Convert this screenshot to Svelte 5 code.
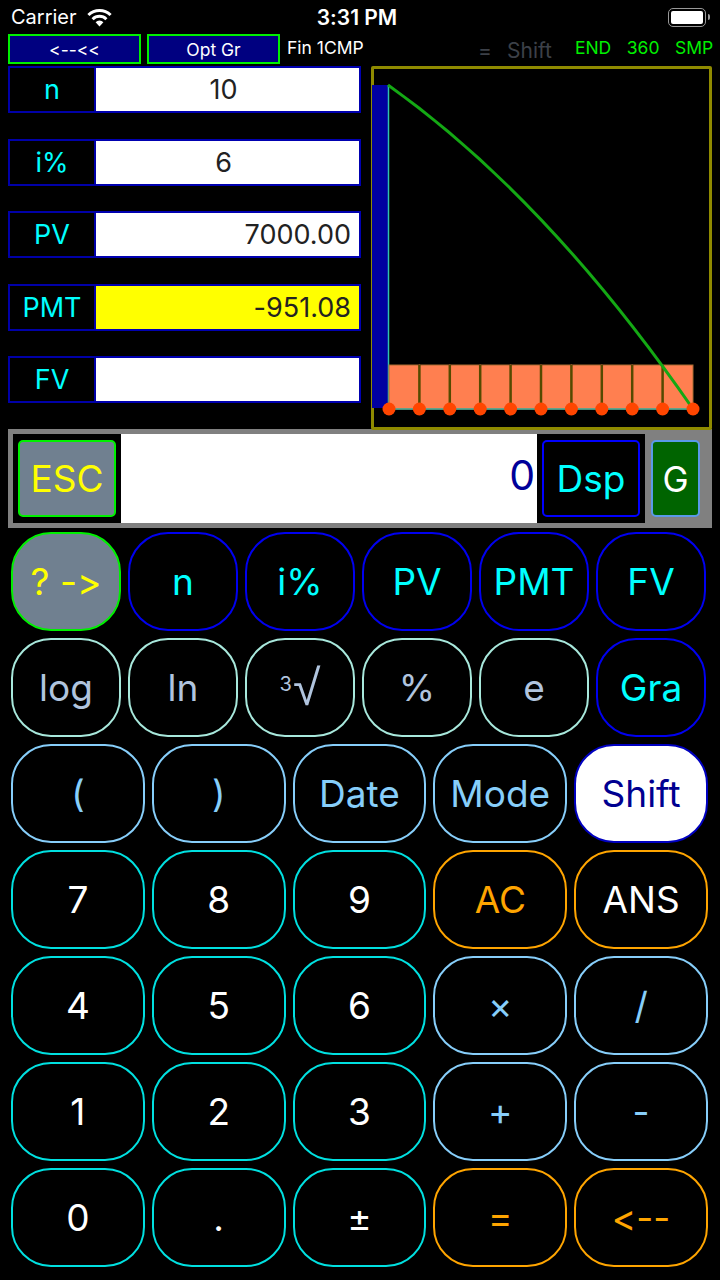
<script>
	const fields = [
		{ label: 'n', value: '10', align: 'center' },
		{ label: 'i%', value: '6', align: 'center' },
		{ label: 'PV', value: '7000.00', align: 'right' },
		{ label: 'PMT', value: '-951.08', align: 'right', active: true },
		{ label: 'FV', value: '', align: 'right' }
	];

	const topKeys = [
		[
			{ t: '? ->', c: 'query' },
			{ t: 'n', c: 'tvm' },
			{ t: 'i%', c: 'tvm' },
			{ t: 'PV', c: 'tvm' },
			{ t: 'PMT', c: 'tvm' },
			{ t: 'FV', c: 'tvm' }
		],
		[
			{ t: 'log', c: 'fn' },
			{ t: 'ln', c: 'fn' },
			{ t: 'root', c: 'fn' },
			{ t: '%', c: 'fn' },
			{ t: 'e', c: 'fn' },
			{ t: 'Gra', c: 'tvm' }
		]
	];

	const bottomKeys = [
		[
			{ t: '(', c: 'op' },
			{ t: ')', c: 'op' },
			{ t: 'Date', c: 'op' },
			{ t: 'Mode', c: 'op' },
			{ t: 'Shift', c: 'shift' }
		],
		[
			{ t: '7', c: 'num' },
			{ t: '8', c: 'num' },
			{ t: '9', c: 'num' },
			{ t: 'AC', c: 'warn' },
			{ t: 'ANS', c: 'ans' }
		],
		[
			{ t: '4', c: 'num' },
			{ t: '5', c: 'num' },
			{ t: '6', c: 'num' },
			{ t: '×', c: 'op' },
			{ t: '/', c: 'op' }
		],
		[
			{ t: '1', c: 'num' },
			{ t: '2', c: 'num' },
			{ t: '3', c: 'num' },
			{ t: '+', c: 'op' },
			{ t: '-', c: 'op' }
		],
		[
			{ t: '0', c: 'num' },
			{ t: '.', c: 'num' },
			{ t: '±', c: 'num' },
			{ t: '=', c: 'warn' },
			{ t: '<--', c: 'warn' }
		]
	];

	// amortization chart, 10 periods
	const periods = Array.from({ length: 10 }, (_, i) => i);
	const dots = Array.from({ length: 11 }, (_, i) => 15 + i * 30.4);
</script>

<div class="screen">
	<div class="status">
		<div class="carrier">
			<span>Carrier</span>
			<svg width="27" height="19" viewBox="0 0 27 19">
				<path d="M13.5 18.5 L9.6 14.2 A5.6 5.6 0 0 1 17.4 14.2 Z" fill="#fff" />
				<path d="M6.6 11.2 A9.8 9.8 0 0 1 20.4 11.2" fill="none" stroke="#fff" stroke-width="3" />
				<path d="M2.4 7 A15.8 15.8 0 0 1 24.6 7" fill="none" stroke="#fff" stroke-width="3" />
			</svg>
		</div>
		<div class="time">3:31 PM</div>
		<div class="battery"><div class="battery-fill"></div></div>
	</div>

	<div class="toolbar">
		<button class="tool">&lt;--&lt;&lt;</button>
		<button class="tool">Opt Gr</button>
		<span class="fin">Fin 1CMP</span>
		<span class="dim eq">=</span>
		<span class="dim">Shift</span>
		<div class="flags">
			<span>END</span>
			<span>360</span>
			<span>SMP</span>
		</div>
	</div>

	<div class="upper">
		<div class="fields">
			{#each fields as f}
				<div class="field">
					<div class="field-label">{f.label}</div>
					<div class="field-value {f.align}" class:active={f.active}>{f.value}</div>
				</div>
			{/each}
		</div>
		<div class="chart">
			<svg width="334" height="358" viewBox="0 0 334 358">
				<rect x="-2" y="16" width="16" height="323" fill="#0000a0" />
				<line x1="14.5" y1="16" x2="14.5" y2="340" stroke="#30c0b0" stroke-width="1.5" />
				{#each periods as i}
					<rect x={15 + i * 30.4} y="296" width="30.4" height="44" fill="#ff7f50" stroke="#a86a30" stroke-width="1" />
					{#if i > 0}
						<line x1={15 + i * 30.4} y1="296" x2={15 + i * 30.4} y2="340" stroke="#554a00" stroke-width="2.5" />
					{/if}
				{/each}
				<line x1="15" y1="340" x2="319" y2="340" stroke="#40b0a0" stroke-width="1.5" />
				<path d="M14 16 Q173 129 319 340" fill="none" stroke="#14a814" stroke-width="3" />
				{#each dots as x}
					<circle cx={x} cy="340" r="6.5" fill="#ff4500" />
				{/each}
			</svg>
		</div>
	</div>

	<div class="display">
		<div class="cell"><button class="esc">ESC</button></div>
		<div class="readout">0</div>
		<div class="cell"><button class="dsp">Dsp</button></div>
		<button class="graph">G</button>
	</div>

	<div class="keys">
		{#each topKeys as row}
			<div class="row six">
				{#each row as k}
					<button class="key {k.c}">
						{#if k.t === 'root'}
							<span class="root"><sup>3</sup>√</span>
						{:else}
							{k.t}
						{/if}
					</button>
				{/each}
			</div>
		{/each}
		{#each bottomKeys as row}
			<div class="row five">
				{#each row as k}
					<button class="key {k.c}">{k.t}</button>
				{/each}
			</div>
		{/each}
	</div>
</div>

<style>
	:global(body) {
		margin: 0;
		background: #000;
	}

	.screen {
		width: 720px;
		height: 1280px;
		background: #000;
		font-family: Inter, 'Liberation Sans', sans-serif;
		font-feature-settings: 'calt' 0, 'liga' 0;
		overflow: hidden;
	}

	button {
		font-family: inherit;
		font-feature-settings: inherit;
		padding: 0;
		box-sizing: border-box;
	}

	.status {
		height: 34px;
		display: grid;
		grid-template-columns: 1fr auto 1fr;
		align-items: center;
		color: #fff;
		padding: 0 14px 0 11px;
	}

	.carrier {
		display: flex;
		align-items: center;
		gap: 9px;
		font-size: 20px;
	}

	.time {
		font-size: 21px;
		font-weight: 600;
		margin-left: -3px;
		white-space: nowrap;
	}

	.battery {
		justify-self: end;
		position: relative;
		width: 38px;
		height: 19px;
		box-sizing: border-box;
		border: 1.5px solid #999;
		border-radius: 5px;
		padding: 2px;
	}

	.battery::after {
		content: '';
		position: absolute;
		right: -5px;
		top: 5px;
		width: 2px;
		height: 6px;
		background: #999;
		border-radius: 0 2px 2px 0;
	}

	.battery-fill {
		height: 100%;
		background: #fff;
		border-radius: 2px;
	}

	.toolbar {
		height: 30px;
		display: flex;
		align-items: flex-start;
		padding-left: 8px;
		color: #fff;
	}

	.tool {
		width: 133px;
		height: 30px;
		margin-right: 6px;
		background: #000080;
		border: 2px solid #00f000;
		color: #fff;
		font-size: 17.5px;
	}

	.fin {
		font-size: 17.5px;
		margin: 3px 0 0 1px;
		width: 191px;
		white-space: nowrap;
	}

	.dim {
		color: #3c4048;
		font-size: 21px;
		margin-top: 4px;
	}

	.eq {
		width: 29px;
	}

	.flags {
		display: flex;
		gap: 15.5px;
		color: #00f000;
		font-size: 17.5px;
		margin: 3px 0 0 23px;
		white-space: nowrap;
	}

	.upper {
		margin-top: 2px;
		height: 363px;
		display: flex;
		padding-left: 8px;
	}

	.fields {
		width: 353px;
		display: flex;
		flex-direction: column;
		gap: 25.5px;
	}

	.field {
		display: flex;
		height: 47px;
	}

	.field-label {
		width: 88px;
		box-sizing: border-box;
		border: 2px solid #0000a8;
		color: #00ffff;
		font-size: 27px;
		display: flex;
		align-items: center;
		justify-content: center;
	}

	.field-value {
		flex: 1;
		box-sizing: border-box;
		border: 2px solid #0000b0;
		border-left-width: 0;
		background: #fff;
		color: #222;
		font-size: 27px;
		display: flex;
		align-items: center;
		padding: 0 8px;
	}

	.field-value.center {
		justify-content: center;
		padding: 0 8px 0 0;
	}

	.field-value.right {
		justify-content: flex-end;
	}

	.field-value.active {
		background: #ffff00;
	}

	.chart {
		width: 341px;
		height: 364px;
		margin-left: 10px;
		box-sizing: border-box;
		border: 3px solid #8f8a00;
		border-radius: 2px;
	}

	.chart svg {
		display: block;
		overflow: visible;
	}

	.display {
		width: 704px;
		height: 99px;
		margin-left: 8px;
		box-sizing: border-box;
		background: #808080;
		border: 5px solid #808080;
		display: flex;
		align-items: stretch;
	}

	.cell {
		width: 108px;
		background: #000;
		box-sizing: border-box;
		padding: 6px 5px;
		display: flex;
	}

	.cell button {
		flex: 1;
		border-radius: 5px;
		font-size: 37px;
	}

	.esc {
		background: #708090;
		border: 2px solid #00f000;
		color: #ffff00;
	}

	.dsp {
		background: #000;
		border: 2px solid #0000ff;
		color: #00ffff;
	}

	.readout {
		flex: 1;
		background: #fff;
		color: #000099;
		font-size: 41px;
		text-align: right;
		padding: 16px 2px 0 0;
		box-sizing: border-box;
	}

	.graph {
		width: 49px;
		margin: 6px 7px 6px 6px;
		background: #006400;
		border: 2px solid #5a9ae8;
		border-radius: 5px;
		color: #fff;
		font-size: 35px;
	}

	.keys {
		display: flex;
		flex-direction: column;
		gap: 7px;
		padding: 4px 12px 0 11px;
	}

	.row {
		display: grid;
		height: 99px;
		column-gap: 7px;
	}

	.six {
		grid-template-columns: repeat(6, 1fr);
		margin-right: 2px;
	}

	.five {
		grid-template-columns: repeat(5, 1fr);
	}

	.key {
		background: #000;
		border: 2px solid #0ff;
		border-radius: 40px;
		font-size: 37px;
		line-height: 1;
	}

	.query {
		background: #708090;
		border-color: #00f000;
		color: #ffff00;
	}

	.tvm {
		border-color: #0000f0;
		color: #00ffff;
	}

	.fn {
		border-color: #a8e8dc;
		color: #b0c4de;
	}

	.op {
		border-color: #87cefa;
		color: #87cefa;
	}

	.num {
		border-color: #00e0e0;
		color: #fff;
	}

	.warn {
		border-color: #ffa500;
		color: #ffa500;
	}

	.ans {
		border-color: #ffa500;
		color: #fff;
	}

	.shift {
		background: #fff;
		border-color: #0000c0;
		color: #000090;
	}

	.root {
		font-family: 'Liberation Sans', sans-serif;
		font-size: 50px;
		line-height: 1;
	}

	.root sup {
		font-family: Inter, sans-serif;
		font-size: 20px;
		margin-right: 1px;
		vertical-align: 14px;
		line-height: 0;
	}
</style>
